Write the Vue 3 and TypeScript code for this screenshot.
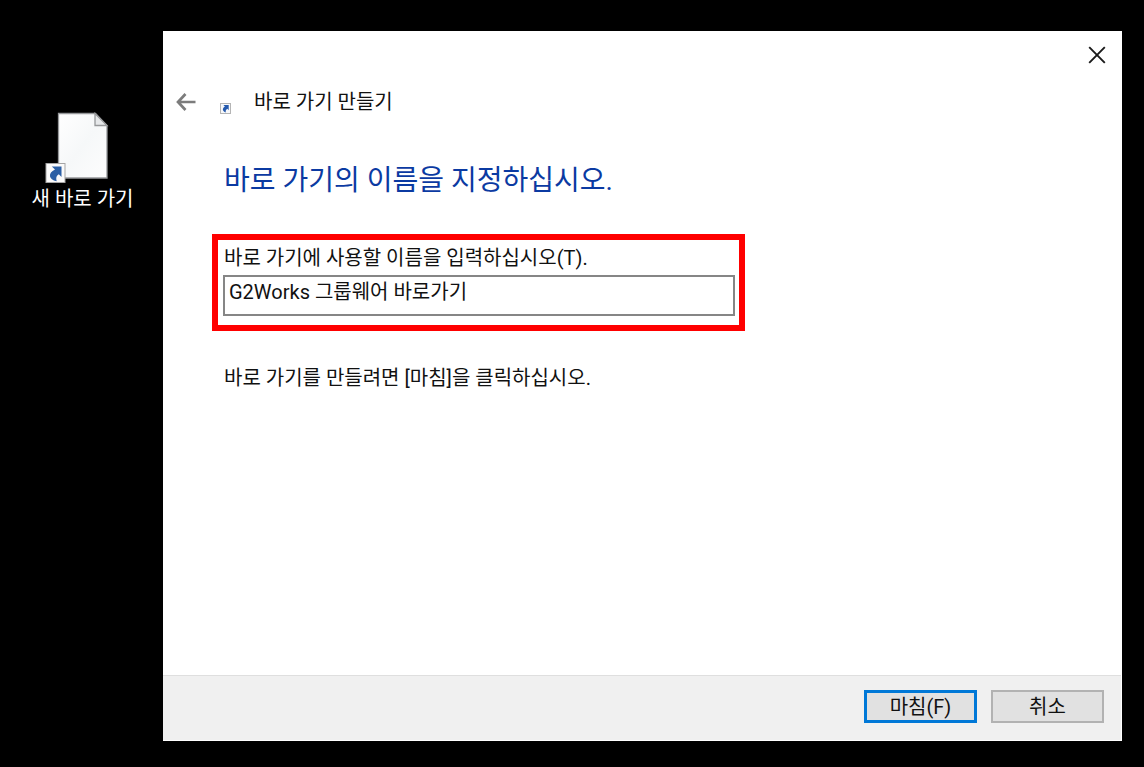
<script setup lang="ts">
import { ref } from 'vue'

const shortcutName = ref('G2Works 그룹웨어 바로가기')
</script>

<template>
  <main class="desktop">
    <aside class="icons">
      <button class="shortcut" type="button">
        <svg class="file" viewBox="0 0 66 72" aria-hidden="true">
          <defs>
            <linearGradient id="paper" x1="0" y1="0" x2="1" y2="1">
              <stop offset="0" stop-color="#ffffff" />
              <stop offset="0.5" stop-color="#f6f8f9" />
              <stop offset="1" stop-color="#fdfdfd" />
            </linearGradient>
          </defs>
          <path d="M13.5 1.5H50.5L62 13.5V66H13.5Z" fill="url(#paper)" stroke="#96989a" stroke-width="1.3" />
          <path d="M50 1.5V13.5H62Z" fill="#e6e8ea" stroke="#96989a" stroke-width="1.3" />
          <rect x="1" y="51.5" width="19" height="19" fill="#fafafa" stroke="#a5a5a5" />
          <path d="M6.8 54.500H16.500V65L13.800 62.200C11.300 63.700 10.700 66 11.700 69.200C3.500 68 2.600 61 10 57.600Z" fill="#2b5fa5" />
        </svg>
        <span>새 바로 가기</span>
      </button>
    </aside>

    <section class="dialog" role="dialog" aria-labelledby="wizard-title">
      <div class="caption">
        <button class="icon-button" type="button" aria-label="닫기">
          <svg width="18" height="18" viewBox="0 0 18 18" aria-hidden="true">
            <path d="M1.2 1.2L16.8 16.8M16.8 1.2L1.2 16.8" stroke="#1a1a1a" stroke-width="1.9" fill="none" />
          </svg>
        </button>
      </div>
      <header class="header">
        <button class="icon-button" type="button" aria-label="뒤로">
          <svg width="20" height="18" viewBox="0 0 20 18" aria-hidden="true">
            <path d="M2 9H19.5M9.500 1L2 9L9.500 17" stroke="#7c7c7c" stroke-width="2.7" fill="none" />
          </svg>
        </button>
        <svg class="mini" width="11" height="11" viewBox="0 0 11 11" aria-hidden="true">
          <rect x="0.5" y="0.5" width="10" height="10" fill="#f7f8fa" stroke="#b5b5b5" />
          <path d="M3.4 2H8.700V7.200L7.400 5.800C5.900 6.600 5.500 7.700 5.800 9.500C2.300 8.600 1.900 5.300 4.900 3.600Z" fill="#2459ad" />
        </svg>
        <span id="wizard-title">바로 가기 만들기</span>
      </header>

      <div class="body">
        <h1>바로 가기의 이름을 지정하십시오.</h1>
        <div class="field">
          <label for="name">바로 가기에 사용할 이름을 입력하십시오(T).</label>
          <input id="name" v-model="shortcutName" type="text" />
        </div>
        <p>바로 가기를 만들려면 [마침]을 클릭하십시오.</p>
      </div>

      <footer class="footer">
        <button class="action primary" type="button">마침(F)</button>
        <button class="action" type="button">취소</button>
      </footer>
    </section>
  </main>
</template>

<style>
body {
  margin: 0;
  background: #000;
}
</style>

<style scoped>
.desktop {
  display: flex;
  box-sizing: border-box;
  min-height: 100vh;
  padding: 31px 22px 26px 0;
  background: #000;
  color: #111;
  font: 20px/28px Roboto, "Noto Sans CJK KR", sans-serif;
}
button,
input {
  font: inherit;
  color: inherit;
}
.icons {
  flex: 0 0 163px;
  display: flex;
  flex-direction: column;
  align-items: center;
  padding: 81px 0 0 2px;
  box-sizing: border-box;
}
.shortcut {
  display: flex;
  flex-direction: column;
  align-items: center;
  gap: 1px;
  padding: 0;
  border: 0;
  background: none;
  color: #fff;
}
.file {
  width: 66px;
  height: 72px;
  margin-right: 8px;
}
.dialog {
  flex: 1;
  display: flex;
  flex-direction: column;
  box-sizing: border-box;
  min-width: 0;
  border-right: 1px solid #fff;
  border-bottom: 1px solid #fff;
  background: #fff;
}
.caption {
  display: flex;
  justify-content: flex-end;
  padding: 15px 15px 0 0;
}
.icon-button {
  display: flex;
  padding: 0;
  border: 0;
  background: none;
}
.header {
  display: flex;
  align-items: center;
  padding: 24px 13px 0;
}
.mini {
  margin: 12px 23px 0 24px;
}
.body {
  flex: 1;
  padding: 43px 49px 0;
}
h1 {
  margin: 0 0 31px;
  padding-left: 12px;
  color: #0b3aa2;
  font-size: 28px;
  line-height: 44px;
  font-weight: 400;
}
.field {
  display: flex;
  flex-direction: column;
  box-sizing: border-box;
  width: 100%;
  max-width: 533px;
  padding: 2px 4px 9px 5px;
  border: 6px solid #f00;
}
label {
  padding: 2px 1px 3px;
}
input {
  box-sizing: border-box;
  width: 100%;
  height: 41px;
  padding: 0 4px 10px;
  border: 2px solid #868686;
  border-radius: 0;
  background: #fff;
  outline: 0;
}
p {
  margin: 33px 0 0;
  padding-left: 12px;
}
.footer {
  display: flex;
  justify-content: flex-end;
  gap: 14px;
  padding: 14px 17px 17px;
  border-top: 1px solid #dfdfdf;
  background: #f0f0f0;
}
.action {
  box-sizing: border-box;
  width: 113px;
  height: 33px;
  padding: 0;
  border: 2px solid #b2b2b2;
  background: #e1e1e1;
  line-height: 24px;
}
.primary {
  border: 3px solid #0078d7;
}
</style>
